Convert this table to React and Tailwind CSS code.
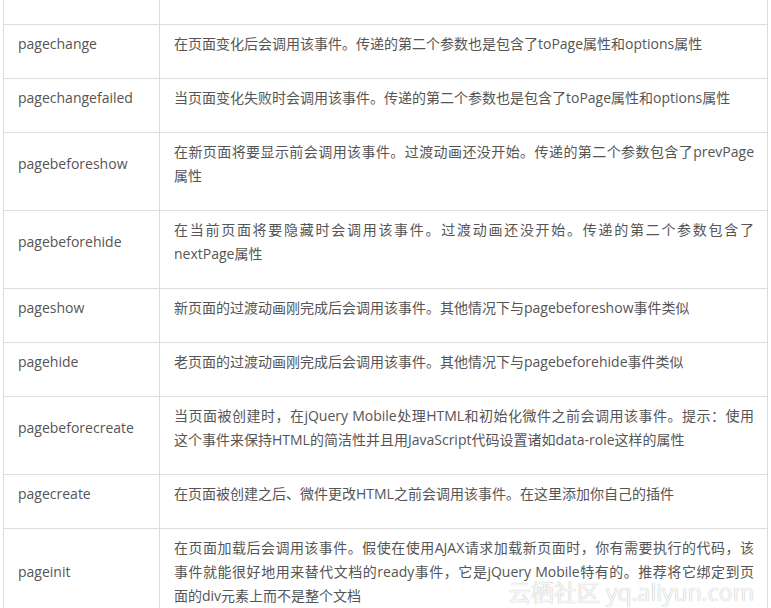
import React from "react";

const rows = [
  { name: "pagechange", lines: ["在页面变化后会调用该事件。传递的第二个参数也是包含了toPage属性和options属性"] },
  { name: "pagechangefailed", lines: ["当页面变化失败时会调用该事件。传递的第二个参数也是包含了toPage属性和options属性"] },
  { name: "pagebeforeshow", lines: ["在新页面将要显示前会调用该事件。过渡动画还没开始。传递的第二个参数包含了prevPage", "属性"] },
  { name: "pagebeforehide", lines: ["在当前页面将要隐藏时会调用该事件。过渡动画还没开始。传递的第二个参数包含了", "nextPage属性"] },
  { name: "pageshow", lines: ["新页面的过渡动画刚完成后会调用该事件。其他情况下与pagebeforeshow事件类似"] },
  { name: "pagehide", lines: ["老页面的过渡动画刚完成后会调用该事件。其他情况下与pagebeforehide事件类似"] },
  { name: "pagebeforecreate", lines: ["当页面被创建时，在jQuery Mobile处理HTML和初始化微件之前会调用该事件。提示：使用", "这个事件来保持HTML的简洁性并且用JavaScript代码设置诸如data-role这样的属性"] },
  { name: "pagecreate", lines: ["在页面被创建之后、微件更改HTML之前会调用该事件。在这里添加你自己的插件"] },
  { name: "pageinit", lines: ["在页面加载后会调用该事件。假使在使用AJAX请求加载新页面时，你有需要执行的代码，该", "事件就能很好地用来替代文档的ready事件，它是jQuery Mobile特有的。推荐将它绑定到页", "面的div元素上而不是整个文档"] },
];

export default function App() {
  return (
    <div
      className="relative bg-white text-[14px] leading-[24px] text-[#555]"
      style={{ fontFamily: '"Open Sans", "Noto Sans CJK SC", sans-serif' }}
    >
      <div className="ml-[3px] w-[765px] border-l border-r border-[#ddd]">
        <div className="grid h-[25px] grid-cols-[156px_1fr] border-b border-[#ddd]">
          <div className="border-r border-[#ddd]" />
          <div />
        </div>
        {rows.map((r) => (
          <div key={r.name} className="grid grid-cols-[156px_1fr] border-b border-[#ddd]">
            <div className="flex items-center border-r border-[#ddd] pb-[22px] pl-[14px] pt-[7px]">
              {r.name}
            </div>
            <div className="pb-[22px] pl-[14px] pr-[13px] pt-[7px]">
              {r.lines.map((l, i) => (
                <div
                  key={i}
                  className={
                    i < r.lines.length - 1
                      ? "whitespace-nowrap text-justify [text-align-last:justify]"
                      : "whitespace-nowrap"
                  }
                >
                  {l}
                </div>
              ))}
            </div>
          </div>
        ))}
      </div>
      <div className="pointer-events-none absolute left-[508px] top-[579px] whitespace-nowrap text-[23px] leading-[26px] text-[#f7f7f7] [text-shadow:0_0_1px_rgba(0,0,0,0.35)]">
        云栖社区 yq.aliyun.com
      </div>
    </div>
  );
}
